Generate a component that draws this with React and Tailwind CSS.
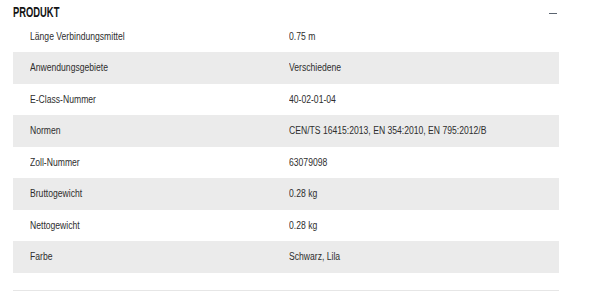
import React from 'react'

const rows = [
  ['Länge Verbindungsmittel', '0.75 m'],
  ['Anwendungsgebiete', 'Verschiedene'],
  ['E-Class-Nummer', '40-02-01-04'],
  ['Normen', 'CEN/TS 16415:2013, EN 354:2010, EN 795:2012/B'],
  ['Zoll-Nummer', '63079098'],
  ['Bruttogewicht', '0.28 kg'],
  ['Nettogewicht', '0.28 kg'],
  ['Farbe', 'Schwarz, Lila'],
]

export default function App() {
  return (
    <div className="w-[600px] h-[293px] bg-white overflow-hidden font-['Liberation_Sans',Arial,sans-serif]">
      <div className="ml-[13px] w-[546px]">
        {/* Header */}
        <div className="flex items-center justify-between h-[20.5px] pt-[4px]">
          <h2 className="text-[14px] font-bold text-[#141414] leading-none whitespace-nowrap">
            <span className="inline-block scale-x-[0.67] origin-left">PRODUKT</span>
          </h2>
          <span className="w-[8px] h-[1.5px] bg-[#5b6470] mr-[2px] mt-[2px]" />
        </div>

        {/* Table */}
        <div>
          {rows.map(([label, value], i) => (
            <div
              key={label}
              className={`flex items-center h-[31.5px] text-[10px] text-[#2e2e2e] whitespace-nowrap ${i % 2 === 1 ? 'bg-[#ebebeb]' : 'bg-white'}`}
            >
              <div className="w-[276px] pl-[17px]">
                <span className="inline-block scale-x-[0.86] origin-left">{label}</span>
              </div>
              <div className="flex-1">
                <span className="inline-block scale-x-[0.86] origin-left">{value}</span>
              </div>
            </div>
          ))}
        </div>

        <div className="mt-[17px] h-px bg-[#e6e6e6]" />
      </div>
    </div>
  )
}
